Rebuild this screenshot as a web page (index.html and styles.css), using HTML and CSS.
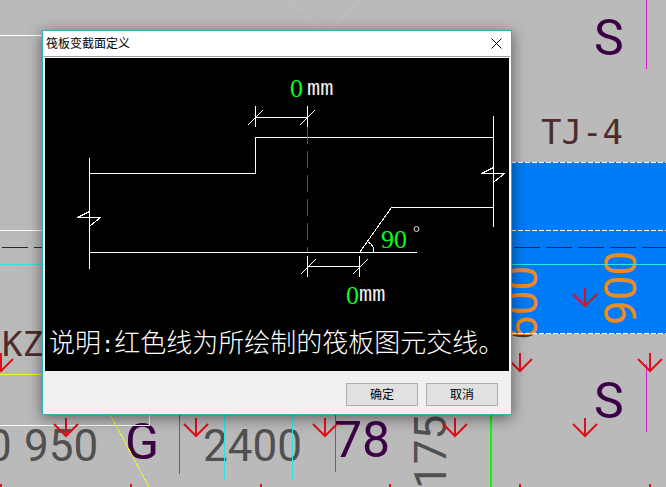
FILE: index.html
```html
<!DOCTYPE html>
<html lang="zh-CN">
<head>
<meta charset="utf-8">
<meta name="viewport" content="width=device-width, initial-scale=1">
<title>筏板变截面定义</title>
<link rel="stylesheet" href="styles.css">
</head>
<body>
<svg class="plan" viewBox="0 0 666 487" preserveAspectRatio="xMinYMin slice">
  <defs>
    <linearGradient id="dim-fill" gradientUnits="userSpaceOnUse" x1="0" y1="0" x2="74" y2="0">
      <stop offset="0.07" stop-color="#3c3c3c"/>
      <stop offset="0.07" stop-color="#ee8a22"/>
    </linearGradient>
    <path id="arrow" d="M0-18V0M-12-12L0 0L12-12"/>
  </defs>
  <path class="faint" d="M333 27L360 0M290 0L318 27"/>
  <rect class="beam" x="511" y="162" width="155" height="172"/>
  <g class="dims">
    <text x="-13" y="461">0</text>
    <text x="24" y="461">950</text>
    <text x="203" y="461">2400</text>
    <text transform="translate(446 489) rotate(-90)">1750</text>
    <text class="selected" transform="translate(636 325) rotate(-90)">900</text>
    <text class="crossing" transform="translate(537 340) rotate(-90)">600</text>
  </g>
  <g class="tags">
    <text x="541" y="144">TJ-4</text>
    <text x="2" y="356">KZ</text>
  </g>
  <g class="axes">
    <text x="594" y="55">S</text>
    <text x="594" y="418">S</text>
    <text x="125" y="459">G</text>
    <text x="334" y="457">78</text>
  </g>
  <g class="lines">
    <path class="white" d="M0 35.5H43M0 230.5H43M0 425.5H149.5V414"/>
    <path class="white dashed" d="M511 162.5H666M511 230.5H666M511 333.5H666"/>
    <path class="dark" d="M2 247.5H43M514 247.5H666"/>
    <path class="cyan" d="M0 264.5H43M511 264.5H666M224.5 414V480M292.5 414V480"/>
    <path class="magenta" d="M646.5 0V69M646.5 364V432M179.5 414V474M335.5 414V472"/>
    <path class="yellow" d="M0 374.5H43M110 414L149 487"/>
    <path class="green" d="M491 414V487"/>
  </g>
  <g class="arrows">
    <use href="#arrow" x="1" y="371"/>
    <use href="#arrow" x="520" y="371"/>
    <use href="#arrow" x="650" y="371"/>
    <use href="#arrow" x="585" y="306"/>
    <use href="#arrow" x="66" y="436"/>
    <use href="#arrow" x="196" y="436"/>
    <use href="#arrow" x="325" y="436"/>
    <use href="#arrow" x="455" y="436"/>
    <use href="#arrow" x="585" y="436"/>
    <use href="#arrow" x="1" y="502"/>
    <use href="#arrow" x="131" y="502"/>
    <use href="#arrow" x="261" y="502"/>
    <use href="#arrow" x="390" y="502"/>
    <use href="#arrow" x="520" y="502"/>
    <use href="#arrow" x="650" y="502"/>
  </g>
</svg>

<section class="dialog" role="dialog" aria-labelledby="dialog-title">
  <header class="titlebar">
    <h1 id="dialog-title">筏板变截面定义</h1>
    <button class="close" type="button" aria-label="关闭">
      <svg viewBox="0 0 11 11" width="11" height="11"><path d="M.5.5L10.5 10.5M10.5.5L.5 10.5"/></svg>
    </button>
  </header>
  <div class="content">
    <svg class="section-drawing" viewBox="45 58 464 264">
      <g class="outline">
        <path d="M89.500 158V269M89.500 173.500H255.500V137.500H493.500M89.500 252.500H417M493.500 116V227M359.500 252.500L391.500 207.500H493.500"/>
        <path d="M89.500 211.500L77.500 217.500H100.500L90.500 225.500M493.500 167.500L481.500 173.500H504.500L494.500 181.500"/>
        <path d="M255.500 106V127M307.500 106V127M255.500 117.500H307.500M247.500 125.500L262.500 110.500M299.500 125.500L314.500 110.500"/>
        <path d="M307.500 256V277M359.500 256V277M307.500 266.500H359.500M300.500 274.500L315.500 259.500M352.500 274.500L367.500 259.500"/>
        <path d="M367.500 241.500Q375 246 373.500 252.500"/>
      </g>
      <path class="joint" d="M307.500 127V252"/>
      <text class="value" x="290" y="97">0</text>
      <text class="unit" x="307" y="95">mm</text>
      <text class="value" x="381" y="248">90</text>
      <circle class="degree" cx="416.500" cy="229" r="2.500"/>
      <text class="value" x="346" y="304">0</text>
      <text class="unit" x="359" y="301">mm</text>
    </svg>
    <p class="note">说明<span class="colon">:</span>红色线为所绘制的筏板图元交线。</p>
  </div>
  <footer class="actions">
    <button type="button">确定</button>
    <button type="button">取消</button>
  </footer>
</section>
</body>
</html>
```
FILE: styles.css
```css
* { box-sizing: border-box; }

body {
  margin: 0;
  min-height: 100vh;
  padding: 30px 154px 72px 42px;
  overflow: hidden;
  background: #bababa;
  font-family: "Liberation Sans", "Noto Sans CJK SC", sans-serif;
}

/* Floor plan behind the dialog */
.plan {
  position: absolute;
  inset: 0;
  width: 100%;
  height: 100%;
  font-family: Roboto, sans-serif;
}
.beam { fill: #007bf8; }
.faint { stroke: #c2c2c2; fill: none; }
.dims { fill: #505050; font-size: 44px; font-weight: 400; }
.dims .selected { fill: #ee8a22; }
.dims .crossing { fill: url(#dim-fill); }
.tags { fill: #4d2c2c; font: 34px "DejaVu Sans Mono", monospace; }
.axes { fill: #3c0046; font: 400 50px Roboto, sans-serif; }
.lines { fill: none; }
.lines path { shape-rendering: crispEdges; }
.white { stroke: #fff; }
.dashed { stroke-dasharray: 5 2; }
.dark { stroke: #222a33; stroke-dasharray: 26 6; }
.cyan { stroke: #2be5e5; }
.magenta { stroke: #d41bd4; }
.yellow { stroke: #f2f22a; }
.green { stroke: #0f0; stroke-width: 2; }
.arrows { fill: none; stroke: #e0101a; stroke-width: 2; }

/* Dialog */
.dialog {
  position: relative;
  border: 1px solid #35aeb6;
  background: #f0f0f0;
  box-shadow: 0 3px 14px rgba(0, 0, 0, .5);
}
.titlebar {
  display: flex;
  align-items: center;
  justify-content: space-between;
  height: 25px;
  padding: 0 3px;
  background: #fff;
}
.titlebar h1 {
  margin: 0;
  font-size: 12px;
  line-height: 16px;
  font-weight: 400;
  color: #000;
}
.close {
  display: grid;
  place-items: center;
  width: 24px;
  height: 22px;
  padding: 0;
  border: 0;
  background: none;
}
.close path { stroke: #000; stroke-width: 1; }
.content {
  border: 2px solid #fff;
  border-top: 1px solid #a0a0a0;
  border-bottom: 0;
  background: #000;
}
.section-drawing {
  display: block;
  width: 100%;
  border-top: 1px solid #fff;
}
.outline {
  fill: none;
  stroke: #fff;
  shape-rendering: crispEdges;
}
.joint {
  stroke: #e01c22;
  stroke-dasharray: 17 7;
  shape-rendering: crispEdges;
}
.value {
  fill: #00ff1c;
  font: 26px "Liberation Serif", serif;
}
.unit {
  fill: #f0f0f0;
  font: 22px "Liberation Mono", monospace;
}
.degree { fill: none; stroke: #e0e0e0; }
.note {
  margin: 0;
  padding: 0 0 11px 4px;
  color: #fff;
  font: 300 26px/38px "Noto Sans CJK SC", sans-serif;
  white-space: nowrap;
}
.colon { font: 22px "Liberation Mono", monospace; }
.actions {
  display: flex;
  justify-content: flex-end;
  gap: 8px;
  padding: 12px 13px 8px;
}
.actions button {
  width: 72px;
  height: 23px;
  padding: 0;
  border: 1px solid #adadad;
  background: #e1e1e1;
  color: #000;
  font: 12px/16px "Liberation Sans", "Noto Sans CJK SC", sans-serif;
}
```
